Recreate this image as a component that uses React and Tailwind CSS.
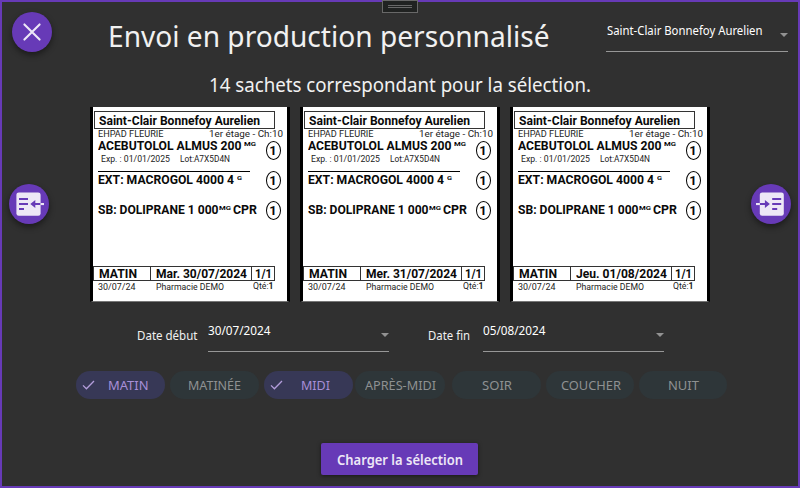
import React, { useLayoutEffect, useRef } from "react";

// Single line of text stretched or condensed to a given advance width.
function Fit({ w, className = "", children }) {
  const ref = useRef(null);
  useLayoutEffect(() => {
    const el = ref.current;
    el.style.transform = "none";
    const natural = el.getBoundingClientRect().width;
    el.style.transform = `scaleX(${w / natural})`;
  }, [w, children]);
  return (
    <span className={`block shrink-0 whitespace-pre ${className}`} style={{ width: w }}>
      <span ref={ref} className="inline-block origin-left align-top">
        {children}
      </span>
    </span>
  );
}

function Dose() {
  return (
    <div className="flex h-[19px] w-[15px] items-center justify-center rounded-[50%] border border-black text-[13px] font-bold leading-none">
      1
    </div>
  );
}

function Sachet({ date }) {
  return (
    <article className="flex h-[195px] w-[200px] flex-col border-x-[3px] border-b border-black border-b-[#777] bg-white font-[Roboto,sans-serif] text-[#0a0a0a]">
      <div className="ml-px mt-1 h-[18px] w-[181px] border border-[#333] pl-1 text-[12.5px] font-bold leading-[17px]">
        <Fit w={161}>Saint-Clair Bonnefoy Aurelien</Fit>
      </div>
      <div className="flex h-[9px] items-baseline pl-[4.5px] leading-[9px] text-[#222]">
        <Fit w={65.5} className="text-[9px]">EHPAD FLEURIE</Fit>
        <Fit w={74} className="ml-[45.5px] text-[9.5px]">1er étage - Ch:10</Fit>
      </div>
      <div className="flex h-[128px]">
        <div className="w-[172px] pl-[5px]">
          <div className="flex h-[15px] text-[12px] font-bold leading-[17px]">
            <Fit w={143.5}>ACEBUTOLOL ALMUS 200</Fit>
            <Fit w={12} className="ml-[2.5px] text-[6px] leading-[11px]">MG</Fit>
          </div>
          <div className="flex h-3 pl-[3px] text-[8.5px] leading-3 text-[#222]">
            <Fit w={69}>Exp. : 01/01/2025</Fit>
            <Fit w={50} className="ml-[9.5px]">Lot:A7X5D4N</Fit>
          </div>
          <div className="mt-1.5 h-px w-[152px] bg-black" />
          <div className="flex h-[14px] text-[12px] font-bold leading-[16px]">
            <Fit w={136}>EXT: MACROGOL 4000 4</Fit>
            <Fit w={5} className="ml-[2.5px] text-[6px] leading-[11px]">G</Fit>
          </div>
          <div className="mt-4 flex h-[14px] text-[12px] font-bold leading-[16px]">
            <Fit w={120.5}>SB: DOLIPRANE 1 000</Fit>
            <Fit w={12} className="text-[6px] leading-[11px]">MG</Fit>
            <Fit w={24} className="ml-[2.5px]">CPR</Fit>
          </div>
        </div>
        <div className="flex flex-col gap-[11px] pl-[0.5px] pt-[2.5px]">
          <Dose />
          <Dose />
          <Dose />
        </div>
      </div>
      <div className="flex h-[15px] w-[182px] border border-[#333] text-[12px] font-bold leading-[14px]">
        <div className="w-[56px] pl-[5px]">
          <Fit w={38}>MATIN</Fit>
        </div>
        <div className="w-[101px] border-l border-[#333] pl-[4.5px]">
          <Fit w={91}>{date}</Fit>
        </div>
        <div className="grow border-l border-[#333] pl-[2.5px]">
          <Fit w={17}>1/1</Fit>
        </div>
      </div>
      <div className="flex pl-[5px] text-[8.5px] leading-[12px] text-[#222]">
        <Fit w={37.5}>30/07/24</Fit>
        <Fit w={68} className="ml-[20px]">Pharmacie DEMO</Fit>
        <Fit w={20.5} className="ml-[29px] leading-[10px]">
          Qté:<b>1</b>
        </Fit>
      </div>
    </article>
  );
}

const ROUND =
  "flex size-10 shrink-0 items-center justify-center rounded-full bg-[#673ab7] shadow-[0_3px_6px_rgba(0,0,0,0.45)]";

function PreviousIcon() {
  return (
    <svg width="40" height="40" viewBox="0 0 40 40">
      <rect x="7.4" y="8.4" width="24.2" height="23.4" rx="2.4" fill="#ede7f6" />
      <path d="M10 14h9v2.1h-9zM10 19h9v2.1h-9zM10 24h5v2.1h-5z" fill="#673ab7" />
      <path d="M21.3 20l5-4v3h5.3v2.1h-5.3V24z" fill="#673ab7" />
      <path d="M31.5 19H35v2.1h-3.5z" fill="#ede7f6" />
    </svg>
  );
}

function NextIcon() {
  return (
    <svg width="40" height="40" viewBox="0 0 40 40">
      <rect x="8.8" y="8.4" width="24" height="23.4" rx="2.4" fill="#ede7f6" />
      <path d="M21.2 14h9v2.1h-9zM21.2 19h9v2.1h-9zM21.2 24h5v2.1h-5z" fill="#673ab7" />
      <path d="M18.9 20l-5-4v3H8.8v2.1h5.1V24z" fill="#673ab7" />
      <path d="M5 19h3.9v2.1H5z" fill="#ede7f6" />
    </svg>
  );
}

function Caret({ className }) {
  return (
    <svg width="8" height="4" viewBox="0 0 8 4" className={`shrink-0 ${className}`}>
      <path d="M0 0h8L4 4z" fill="#929292" />
    </svg>
  );
}

function Field({ value, w, className = "", caret }) {
  return (
    <div className={`flex h-8 justify-between border-b border-[#979797] text-[12.2px] leading-[22px] text-white ${className}`}>
      <Fit w={w}>{value}</Fit>
      <Caret className={caret} />
    </div>
  );
}

function Chip({ label, w, on, className }) {
  return (
    <button
      className={`flex h-7 shrink-0 items-center rounded-full text-[12.6px] leading-7 ${
        on ? "bg-[#373856] pl-1.5 text-[#a88fd8]" : "justify-center bg-[#2e3639] text-[#8e9192]"
      } ${className}`}
    >
      {on && (
        <svg width="13" height="10" viewBox="0 0 13 10" fill="none" stroke="#b39ddb" strokeWidth="1.3">
          <path d="M1 5.4l3.4 3.4L12 1" />
        </svg>
      )}
      <Fit w={w} className={`pt-0.5 ${on ? (label === "MIDI" ? "ml-[18px]" : "ml-[12px]") : ""}`}>
        {label}
      </Fit>
    </button>
  );
}

export default function App() {
  return (
    <main className="relative flex h-[488px] w-[800px] flex-col border-2 border-[#673ab7] bg-[#303030] font-['Noto_Sans','Open_Sans',sans-serif] text-[#f1f1f1]">
      <div className="absolute -top-[2px] left-[380px] flex h-[13px] w-9 flex-col items-center gap-px border border-[#686868] bg-[#202221] pt-1">
        <i className="h-px w-6 bg-[#686868]" />
        <i className="h-px w-6 bg-[#686868]" />
      </div>

      <header className="flex h-[69px] shrink-0">
        <button className={`ml-[10px] mt-[10px] ${ROUND}`}>
          <svg width="40" height="40" viewBox="0 0 40 40" stroke="#ede7f6" strokeWidth="2.1" strokeLinecap="round">
            <path d="M12.4 12.4l15.2 15.2M27.6 12.4L12.4 27.6" />
          </svg>
        </button>
        <h1 className="ml-[55.5px] mt-[14px] text-[29px] leading-10">
          <Fit w={441.5}>Envoi en production personnalisé</Fit>
        </h1>
        <Field value="Saint-Clair Bonnefoy Aurelien" w={155.5} className="ml-[57px] mt-[18px] w-[182px] pl-[0.5px]" caret="mt-[13px]" />
      </header>

      <p className="flex h-9 shrink-0 justify-center text-[19.4px] leading-[27px]">
        <Fit w={382}>14 sachets correspondant pour la sélection.</Fit>
      </p>

      <section className="flex h-[195px] shrink-0 items-center justify-between px-[7px]">
        <button className={`mb-px ${ROUND}`}>
          <PreviousIcon />
        </button>
        <div className="flex gap-[10px]">
          <Sachet date="Mar. 30/07/2024" />
          <Sachet date="Mer. 31/07/2024" />
          <Sachet date="Jeu. 01/08/2024" />
        </div>
        <button className={`mb-px ${ROUND}`}>
          <NextIcon />
        </button>
      </section>

      <section className="mt-[18px] flex shrink-0 pl-[134.5px] text-[12px] leading-5">
        <Fit w={60.5} className="pt-[6px]">Date début</Fit>
        <Field value="30/07/2024" w={62.5} className="ml-[11px] w-[181px]" caret="mt-[13px]" />
        <Fit w={42} className="ml-[38.5px] pt-[6px]">Date fin</Fit>
        <Field value="05/08/2024" w={62.5} className="ml-[13.5px] w-[181px]" caret="mt-[13px]" />
      </section>

      <section className="mt-[19px] flex shrink-0 pl-[74px]">
        <Chip label="MATIN" w={40.5} on className="w-[89px]" />
        <Chip label="MATINÉE" w={53} className="ml-[5px] w-[89px]" />
        <Chip label="MIDI" w={29} on className="ml-[5px] w-[89px]" />
        <Chip label="APRÈS-MIDI" w={71} className="ml-[2px] w-[90px]" />
        <Chip label="SOIR" w={30} className="ml-[7px] w-[89px]" />
        <Chip label="COUCHER" w={60} className="ml-[5px] w-[88px]" />
        <Chip label="NUIT" w={31} className="ml-[5px] w-[88px]" />
      </section>

      <button className="ml-[319px] mt-11 flex h-8 w-[157px] shrink-0 justify-center rounded-[2px] bg-[#673ab7] text-[13.6px] font-semibold leading-[34px] text-[#ede7f6] shadow-[0_1px_4px_rgba(0,0,0,0.5)]">
        <Fit w={126} className="ml-px">Charger la sélection</Fit>
      </button>
    </main>
  );
}
